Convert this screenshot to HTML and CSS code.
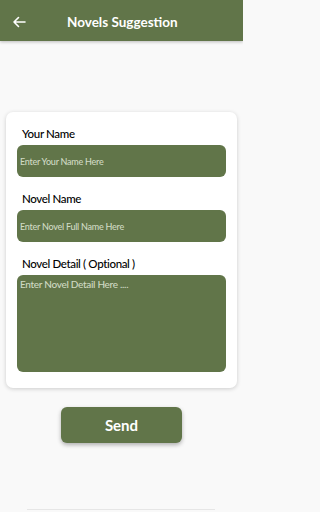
FILE: index.html
```html
<!DOCTYPE html>
<html>
<head>
<meta charset="utf-8">
<link rel="stylesheet" href="styles.css">
</head>
<body>
<header class="appbar">
  <svg class="back" width="14" height="12" viewBox="0 0 14 12"><path d="M13 6H2M6.5 1.5L2 6l4.5 4.5" fill="none" stroke="#fff" stroke-width="1.6" stroke-linecap="round" stroke-linejoin="round"/></svg>
  <h1 class="title">Novels Suggestion</h1>
</header>
<main class="content">
  <section class="card">
    <label class="label">Your Name</label>
    <div class="field"><span class="ph">Enter Your Name Here</span></div>
    <label class="label">Novel Name</label>
    <div class="field"><span class="ph">Enter Novel Full Name Here</span></div>
    <label class="label">Novel Detail ( Optional )</label>
    <div class="field area"><span class="ph">Enter Novel Detail Here ....</span></div>
  </section>
  <button class="send">Send</button>
</main>
<div class="bottom-line"></div>
</body>
</html>
```
FILE: styles.css
```css
html {
  background: #f9f9f9;
}
body {
  margin: 0;
  padding: 0;
  background: #f9f9f9;
  font-family: Lato, "Open Sans", sans-serif;
  width: 243px;
  height: 512px;
  overflow: hidden;
  position: relative;
}
.appbar {
  height: 41px;
  box-sizing: border-box;
  padding-top: 3px;
  background: #617549;
  display: flex;
  align-items: center;
  box-shadow: 0 1px 3px rgba(0,0,0,0.25);
  position: relative;
}
.back {
  margin-left: 12px;
}
.title {
  margin: 0 0 0 41px;
  font-size: 13.5px;
  font-weight: 700;
  color: #fff;
}
.content {
  display: flex;
  flex-direction: column;
  align-items: center;
}
.card {
  margin-top: 71px;
  width: 231px;
  box-sizing: border-box;
  background: #fff;
  border-radius: 7px;
  padding: 14px 11px 16px;
  box-shadow: 0 1px 4px rgba(0,0,0,0.18);
  display: flex;
  flex-direction: column;
}
.label {
  display: block;
  font-size: 11.5px;
  letter-spacing: -0.35px;
  font-weight: 500;
  color: #000;
  line-height: 16px;
  margin-left: 5px;
  margin-bottom: 3px;
}
.field {
  height: 32px;
  background: #617549;
  border-radius: 6px;
  display: flex;
  align-items: center;
  padding-left: 3px;
  margin-bottom: 14px;
}
.field.area {
  height: 97px;
  align-items: flex-start;
  margin-bottom: 0;
}
.area .ph {
  margin-top: 3px;
  font-size: 10px;
  letter-spacing: -0.3px;
}
.ph {
  font-size: 9px;
  letter-spacing: -0.25px;
  color: #d0dac3;
  font-weight: 500;
}
.send {
  margin-top: 19px;
  width: 121px;
  height: 36px;
  border: none;
  border-radius: 6px;
  background: #617549;
  color: #fff;
  font-family: Lato, sans-serif;
  font-weight: 700;
  font-size: 15px;
  box-shadow: 0 2px 4px rgba(0,0,0,0.3);
  padding: 0;
}
.bottom-line {
  position: absolute;
  left: 27px;
  top: 509px;
  width: 188px;
  height: 1px;
  background: #e6e6e6;
}
```
